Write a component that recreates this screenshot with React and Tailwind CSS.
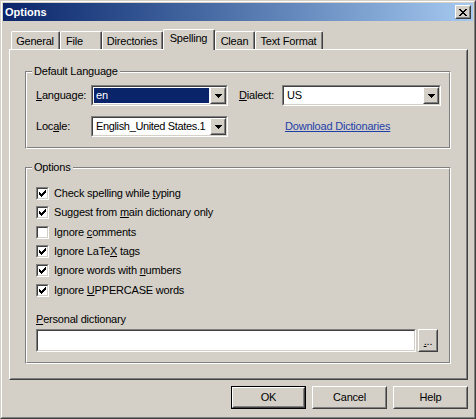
import React from "react";

function Raised({ className = "", inner = "", children }) {
  return (
    <div className={`border border-t-white border-l-white border-r-[#404040] border-b-[#404040] ${className}`}>
      <div className={`h-full w-full border border-t-[#d4d0c8] border-l-[#d4d0c8] border-r-[#808080] border-b-[#808080] flex items-center justify-center ${inner}`}>
        {children}
      </div>
    </div>
  );
}

function Sunken({ className = "", inner = "", children }) {
  return (
    <div className={`border border-t-[#808080] border-l-[#808080] border-r-white border-b-white ${className}`}>
      <div className={`h-full w-full border border-t-[#404040] border-l-[#404040] border-r-[#d4d0c8] border-b-[#d4d0c8] bg-white ${inner}`}>
        {children}
      </div>
    </div>
  );
}

function Arrow() {
  return (
    <svg width="7" height="4" viewBox="0 0 7 4" shapeRendering="crispEdges">
      <rect x="0" y="0" width="7" height="1" fill="#000" />
      <rect x="1" y="1" width="5" height="1" fill="#000" />
      <rect x="2" y="2" width="3" height="1" fill="#000" />
      <rect x="3" y="3" width="1" height="1" fill="#000" />
    </svg>
  );
}

function CloseX() {
  const rows = [
    [0, 2, 6, 2],
    [1, 2, 5, 2],
    [2, 4],
    [3, 2],
    [2, 4],
    [1, 2, 5, 2],
    [0, 2, 6, 2],
  ];
  return (
    <svg width="8" height="7" viewBox="0 0 8 7" shapeRendering="crispEdges">
      {rows.map((r, y) => (
        <g key={y}>
          <rect x={r[0]} y={y} width={r[1]} height="1" fill="#000" />
          {r.length > 2 && <rect x={r[2]} y={y} width={r[3]} height="1" fill="#000" />}
        </g>
      ))}
    </svg>
  );
}

function Check() {
  const rows = [
    [[6, 1]],
    [[5, 2]],
    [[0, 1], [4, 3]],
    [[0, 2], [3, 3]],
    [[0, 5]],
    [[1, 3]],
    [[2, 1]],
  ];
  return (
    <svg width="7" height="7" viewBox="0 0 7 7" shapeRendering="crispEdges">
      {rows.map((segs, y) =>
        segs.map(([x, w], i) => <rect key={`${y}-${i}`} x={x} y={y} width={w} height="1" fill="#000" />)
      )}
    </svg>
  );
}

function Combo({ className = "", text, selected, textClass = "" }) {
  return (
    <Sunken className={`h-[21px] ${className}`} inner="flex items-stretch">
      <div className="flex-1 min-w-0 overflow-hidden p-[1px] flex">
        <div
          className={`flex-1 flex items-center pl-[2px] whitespace-nowrap overflow-hidden ${textClass} ${
            selected ? "bg-[#0a246a] text-white" : "text-black"
          }`}
        >
          {text}
        </div>
      </div>
      <Raised className="w-[16px] h-[17px] shrink-0" inner="bg-[#d4d0c8]">
        <Arrow />
      </Raised>
    </Sunken>
  );
}

function CheckRow({ checked, children, h }) {
  return (
    <div className={`flex items-start ${h}`}>
      <Sunken className="w-[13px] h-[13px] shrink-0" inner="flex items-center justify-center">
        {checked && <Check />}
      </Sunken>
      <span className="ml-[5px] leading-[13px] whitespace-nowrap">{children}</span>
    </div>
  );
}

function Tab({ w, selected, children, left }) {
  if (selected) {
    return (
      <div
        className={`${w} h-[21px] -mb-px relative z-10 bg-[#d4d0c8] border-l border-t border-l-white border-t-white border-r border-r-[#404040] rounded-tl-[2px] rounded-tr-[2px]`}
      >
        <div className="h-full border-r border-r-[#808080] flex items-start justify-center pt-[2px] leading-[13px]">
          {children}
        </div>
      </div>
    );
  }
  return (
    <div
      className={`${w} h-[18px] border-l border-t border-l-white border-t-white border-r border-r-[#404040] rounded-tl-[2px] rounded-tr-[2px]`}
    >
      <div
        className={`h-full border-r border-r-[#808080] flex items-start pt-[3px] leading-[13px] ${
          left ? "justify-start pl-[5px]" : "justify-center"
        }`}
      >
        {children}
      </div>
    </div>
  );
}

function Group({ label, className = "", inner = "", children }) {
  return (
    <div className={`relative border border-t-[#808080] border-l-[#808080] border-r-white border-b-white ${className}`}>
      <div className={`h-full w-full border border-t-white border-l-white border-r-[#808080] border-b-[#808080] ${inner}`}>
        {children}
      </div>
      <span className="absolute -top-[7px] left-[6px] px-[2px] bg-[#d4d0c8] leading-[13px]">{label}</span>
    </div>
  );
}

export default function App() {
  return (
    <div className="w-[476px] h-[419px] bg-[#d4d0c8] text-[11px] tracking-[-0.2px] text-black font-['Liberation_Sans',Arial,sans-serif] select-none">
      <div className="w-full h-full border border-t-[#d4d0c8] border-l-[#d4d0c8] border-r-[#404040] border-b-[#404040]">
        <div className="w-full h-full border border-t-white border-l-white border-r-[#808080] border-b-[#808080] p-[1px] flex flex-col">
          {/* Title bar */}
          <div className="h-[18px] shrink-0 bg-linear-to-r from-[#0a246a] to-[#a6caf0] flex items-center pl-[2px] pr-[2px]">
            <span className="text-white font-bold tracking-normal leading-[13px] flex-1">Options</span>
            <Raised className="w-[16px] h-[14px]" inner="bg-[#d4d0c8]">
              <CloseX />
            </Raised>
          </div>

          {/* Tabs */}
          <div className="mt-[8px] ml-[6px] mr-[5px] flex flex-col">
            <div className="h-[20px] flex items-end pl-[2px]">
              <Tab w="w-[49px]">General</Tab>
              <Tab w="w-[42px]" left>File</Tab>
              <Tab w="w-[61px]">Directories</Tab>
              <Tab w="w-[52px]" selected>Spelling</Tab>
              <Tab w="w-[40px]">Clean</Tab>
              <Tab w="w-[68px]">Text Format</Tab>
            </div>
            {/* Panel */}
            <div className="h-[331px] border border-t-white border-l-white border-r-[#404040] border-b-[#404040]">
              <div className="h-full border border-t-[#d4d0c8] border-l-[#d4d0c8] border-r-[#808080] border-b-[#808080] pt-[20px] pl-[14px] pr-[15px] flex flex-col">
                <Group label="Default Language" className="h-[78px]" inner="pt-[12px] pl-[9px] flex flex-col gap-[10px]">
                  <div className="flex items-center h-[21px]">
                    <span className="w-[55px] leading-[13px]">
                      <u>L</u>anguage:
                    </span>
                    <Combo className="w-[137px]" text="en" selected />
                    <span className="ml-[11px] w-[43px] leading-[13px]">
                      <u>D</u>ialect:
                    </span>
                    <Combo className="w-[159px]" text="US" />
                  </div>
                  <div className="flex items-center h-[21px]">
                    <span className="w-[55px] leading-[13px]">
                      Loc<u>a</u>le:
                    </span>
                    <Combo className="w-[137px]" text="English_United States.1" textClass="tracking-[-0.35px]" />
                    <span className="ml-[57px] underline text-[#1f3fa8] leading-[13px]">Download Dictionaries</span>
                  </div>
                </Group>

                <Group label="Options" className="mt-[18px] h-[197px]" inner="pt-[18px] pl-[9px] pb-[10px] flex flex-col">
                  <CheckRow checked h="h-[19px]">
                    Check spelling while <u>t</u>yping
                  </CheckRow>
                  <CheckRow checked h="h-[20px]">
                    Suggest from <u>m</u>ain dictionary only
                  </CheckRow>
                  <CheckRow h="h-[19px]">
                    Ignore <u>c</u>omments
                  </CheckRow>
                  <CheckRow checked h="h-[19px]">
                    Ignore LaTe<u>X</u> tags
                  </CheckRow>
                  <CheckRow checked h="h-[20px]">
                    Ignore words with <u>n</u>umbers
                  </CheckRow>
                  <CheckRow checked h="h-[13px]">
                    Ignore <u>U</u>PPERCASE words
                  </CheckRow>
                  <div className="mt-auto flex flex-col">
                    <span className="h-[13px] leading-[13px] mb-[3px]">
                      <u>P</u>ersonal dictionary
                    </span>
                    <div className="flex h-[23px]">
                      <Sunken className="w-[380px] h-[23px] shrink-0" />
                      <Raised className="ml-[2px] w-[20px] h-[23px] shrink-0" inner="bg-[#d4d0c8] leading-[13px] pt-[2px]">
                        <span>
                          <u>.</u>..
                        </span>
                      </Raised>
                    </div>
                  </div>
                </Group>
              </div>
            </div>
          </div>

          {/* Buttons */}
          <div className="mt-[6px] flex justify-end pr-[5px] gap-[6px]">
            <div className="w-[75px] h-[23px] border border-black">
              <Raised className="w-full h-full" inner="leading-[13px]">OK</Raised>
            </div>
            <Raised className="w-[75px] h-[23px]" inner="leading-[13px]">Cancel</Raised>
            <Raised className="w-[75px] h-[23px]" inner="leading-[13px]">Help</Raised>
          </div>
        </div>
      </div>
    </div>
  );
}
